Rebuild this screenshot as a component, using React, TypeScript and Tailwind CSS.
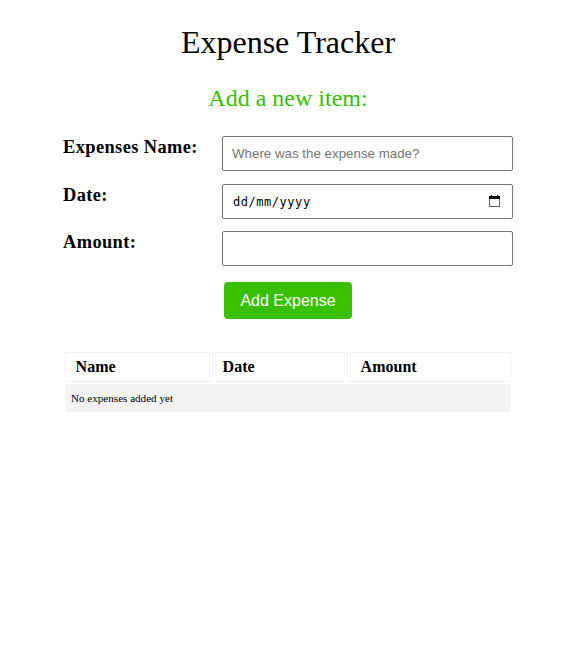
import React from "react";

const serif = "font-['Liberation_Serif',serif]";
const sans = "font-['Liberation_Sans',sans-serif]";

function Field({ label, children }: { label: string; children: React.ReactNode }) {
  return (
    <div className="flex h-[35px]">
      <label className="w-[159px] shrink-0 pt-[1px] text-[18.4px] leading-[21px] font-bold tracking-[0.4px]">{label}</label>
      {children}
    </div>
  );
}

const box = "h-[35px] w-[291px] rounded-[2px] border border-[#767676] bg-white outline-none";

export default function App() {
  return (
    <main className={`${serif} h-[669px] w-[582px] overflow-hidden bg-white text-black`}>
      <h1 className="pt-[24px] pr-[6px] text-center text-[32px] leading-[37px]">Expense Tracker</h1>
      <h2 className="mt-[23px] pr-[6px] text-center text-[24px] leading-[28px] text-[#38c000]">Add a new item:</h2>
      <form className="mt-[24px] ml-[63px] flex flex-col">
        <Field label="Expenses Name:">
          <input className={`${box} ${sans} px-[9px] text-[13.333px] placeholder:text-[#757575]`} placeholder="Where was the expense made?" />
        </Field>
        <div className="h-[13px]" />
        <Field label="Date:">
          <div className={`${box} flex items-center justify-between pr-[12px] pl-[10px] font-['DejaVu_Sans_Mono',monospace] text-[12px] tracking-[0.54px]`}>
            <span className="pt-[1px]">dd/mm/yyyy</span>
            <svg className="mb-[2px]" width="11" height="12" viewBox="0 0 11 12" shapeRendering="crispEdges">
              <path d="M.5 3v8.5h10V3" fill="none" stroke="#666" />
              <path d="M0 1h2V0h1v1h5V0h1v1h2v3H0z" />
            </svg>
          </div>
        </Field>
        <div className="h-[12px]" />
        <Field label="Amount:">
          <input className={`${box} px-[9px]`} />
        </Field>
        <button type="button" className={`${sans} mt-[16px] ml-[161px] h-[37px] w-[128px] rounded-[4px] bg-[#38c000] text-[16px] text-white`}>Add Expense</button>
      </form>
      <table className="mt-[31px] ml-[63px] w-[450px] table-fixed border-separate border-spacing-[2px] text-left">
        <colgroup><col className="w-[145px]" /><col className="w-[136px]" /><col /></colgroup>
        <thead>
          <tr className="h-[30px] text-[16px] leading-[18px]">
            {["Name", "Date", "Amount"].map((name) => (
              <th key={name} className="border border-[#f3f3f3] px-[9.6px] py-0 font-bold">{name}</th>
            ))}
          </tr>
        </thead>
        <tbody>
          <tr className="h-[28px] bg-[#f3f3f3] text-[11.1px]">
            <td colSpan={3} className="px-[6px] py-0">No expenses added yet</td>
          </tr>
        </tbody>
      </table>
    </main>
  );
}
